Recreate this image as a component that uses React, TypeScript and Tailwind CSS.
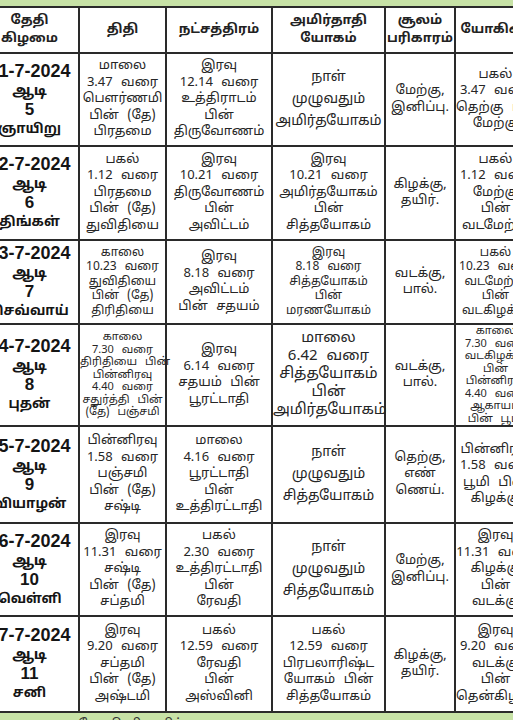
import React from 'react';

type Cell = { lines: string[]; size?: string };

const headers: string[][] = [
  ['தேதி', 'கிழமை'],
  ['திதி'],
  ['நட்சத்திரம்'],
  ['அமிர்தாதி', 'யோகம்'],
  ['சூலம்', 'பரிகாரம்'],
  ['யோகினி'],
];

const rows: { h: string; date: string[]; cells: Cell[] }[] = [
  {
    h: 'h-[93px]',
    date: ['21-7-2024', 'ஆடி', '5', 'ஞாயிறு'],
    cells: [
      { lines: ['மாலை', '3.47 வரை', 'பௌர்ணமி', 'பின் (தே)', 'பிரதமை'] },
      { lines: ['இரவு', '12.14 வரை', 'உத்திராடம்', 'பின்', 'திருவோணம்'] },
      { lines: ['நாள்', 'முழுவதும்', 'அமிர்தயோகம்'], size: 'lg' },
      { lines: ['மேற்கு,', 'இனிப்பு.'] },
      { lines: ['பகல்', '3.47 வரை', 'தெற்கு பின்', 'மேற்கு'] },
    ],
  },
  {
    h: 'h-[94px]',
    date: ['22-7-2024', 'ஆடி', '6', 'திங்கள்'],
    cells: [
      { lines: ['பகல்', '1.12 வரை', 'பிரதமை', 'பின் (தே)', 'துவிதியை'] },
      { lines: ['இரவு', '10.21 வரை', 'திருவோணம்', 'பின்', 'அவிட்டம்'] },
      { lines: ['இரவு', '10.21 வரை', 'அமிர்தயோகம்', 'பின்', 'சித்தயோகம்'] },
      { lines: ['கிழக்கு,', 'தயிர்.'] },
      { lines: ['பகல்', '1.12 வரை', 'மேற்கு', 'பின்', 'வடமேற்கு'] },
    ],
  },
  {
    h: 'h-[84px]',
    date: ['23-7-2024', 'ஆடி', '7', 'செவ்வாய்'],
    cells: [
      { lines: ['காலை', '10.23 வரை', 'துவிதியை', 'பின் (தே)', 'திரிதியை'], size: 'sm' },
      { lines: ['இரவு', '8.18 வரை', 'அவிட்டம்', 'பின் சதயம்'] },
      { lines: ['இரவு', '8.18 வரை', 'சித்தயோகம்', 'பின்', 'மரணயோகம்'], size: 'sm' },
      { lines: ['வடக்கு,', 'பால்.'] },
      { lines: ['பகல்', '10.23 வரை', 'வடமேற்கு', 'பின்', 'வடகிழக்கு'], size: 'sm' },
    ],
  },
  {
    h: 'h-[100px]',
    date: ['24-7-2024', 'ஆடி', '8', 'புதன்'],
    cells: [
      { lines: ['காலை', '7.30 வரை', 'திரிதியை பின்', 'பின்னிரவு', '4.40 வரை', 'சதுர்த்தி பின்', '(தே) பஞ்சமி'], size: 'xs' },
      { lines: ['இரவு', '6.14 வரை', 'சதயம் பின்', 'பூரட்டாதி'] },
      { lines: ['மாலை', '6.42 வரை', 'சித்தயோகம்', 'பின்', 'அமிர்தயோகம்'], size: 'xl' },
      { lines: ['வடக்கு,', 'பால்.'] },
      { lines: ['காலை', '7.30 வரை', 'வடகிழக்கு', 'பின்', 'பின்னிரவு', '4.40 வரை', 'ஆகாயம்', 'பின் பூமி'], size: 'xs' },
    ],
  },
  {
    h: 'h-[97px]',
    date: ['25-7-2024', 'ஆடி', '9', 'வியாழன்'],
    cells: [
      { lines: ['பின்னிரவு', '1.58 வரை', 'பஞ்சமி', 'பின் (தே)', 'சஷ்டி'] },
      { lines: ['மாலை', '4.16 வரை', 'பூரட்டாதி', 'பின்', 'உத்திரட்டாதி'] },
      { lines: ['நாள்', 'முழுவதும்', 'சித்தயோகம்'], size: 'lg' },
      { lines: ['தெற்கு,', 'எண்', 'ணெய்.'] },
      { lines: ['பின்னிரவு', '1.58 வரை', 'பூமி பின்', 'கிழக்கு'] },
    ],
  },
  {
    h: 'h-[93px]',
    date: ['26-7-2024', 'ஆடி', '10', 'வெள்ளி'],
    cells: [
      { lines: ['இரவு', '11.31 வரை', 'சஷ்டி', 'பின் (தே)', 'சப்தமி'] },
      { lines: ['பகல்', '2.30 வரை', 'உத்திரட்டாதி', 'பின்', 'ரேவதி'] },
      { lines: ['நாள்', 'முழுவதும்', 'சித்தயோகம்'], size: 'lg' },
      { lines: ['மேற்கு,', 'இனிப்பு.'] },
      { lines: ['இரவு', '11.31 வரை', 'கிழக்கு', 'பின்', 'வடக்கு'] },
    ],
  },
  {
    h: 'h-[96px]',
    date: ['27-7-2024', 'ஆடி', '11', 'சனி'],
    cells: [
      { lines: ['இரவு', '9.20 வரை', 'சப்தமி', 'பின் (தே)', 'அஷ்டமி'] },
      { lines: ['பகல்', '12.59 வரை', 'ரேவதி', 'பின்', 'அஸ்வினி'] },
      { lines: ['பகல்', '12.59 வரை', 'பிரபலாரிஷ்ட', 'யோகம் பின்', 'சித்தயோகம்'] },
      { lines: ['கிழக்கு,', 'தயிர்.'] },
      { lines: ['இரவு', '9.20 வரை', 'வடக்கு', 'பின்', 'தென்கிழக்கு'] },
    ],
  },
];

function sizeClass(size?: string) {
  if (size === 'xs') return 'text-[11px] leading-[12.5px]';
  if (size === 'sm') return 'text-[12px] leading-[14.5px]';
  if (size === 'lg') return 'text-[14px] leading-[22px]';
  if (size === 'xl') return 'text-[15px] leading-[18px]';
  return 'text-[13px] leading-[16.5px]';
}

export default function App() {
  return (
    <div className="w-[513px] h-[720px] overflow-hidden bg-[#c7e2a6] pt-[6px] font-['Noto_Sans_Tamil','Noto_Sans','Liberation_Sans',sans-serif] text-[#262626]">
      <table className="-ml-[21px] w-[556px] table-fixed border-collapse bg-white">
        <colgroup>
          <col className="w-[99px]" />
          <col className="w-[87px]" />
          <col className="w-[106px]" />
          <col className="w-[113px]" />
          <col className="w-[70px]" />
          <col className="w-[81px]" />
        </colgroup>
        <thead>
          <tr className="h-[46px]">
            {headers.map((h, i) => (
              <th
                key={i}
                className="border-2 border-[#2a2a2a] px-0 text-center align-middle text-[13px] font-bold leading-[18px] whitespace-nowrap text-[#222]"
              >
                {h.map((l) => (
                  <div key={l}>{l}</div>
                ))}
              </th>
            ))}
          </tr>
        </thead>
        <tbody>
          {rows.map((r) => (
            <tr key={r.date[0]} className={r.h}>
              <td className="border-2 border-[#2a2a2a] text-center align-middle font-bold text-[#151515] whitespace-nowrap">
                <div className="text-[18px] leading-[22px] font-['Liberation_Sans',sans-serif]">{r.date[0]}</div>
                <div className="text-[15px] leading-[19px]">{r.date[1]}</div>
                <div className="text-[17px] leading-[18px] font-['Liberation_Sans',sans-serif]">{r.date[2]}</div>
                <div className="text-[13.5px] leading-[21px]">{r.date[3]}</div>
              </td>
              {r.cells.map((c, i) => (
                <td
                  key={i}
                  className={`border-2 border-[#2a2a2a] px-0 text-center align-middle whitespace-nowrap [word-spacing:5px] ${sizeClass(c.size)}`}
                >
                  {c.lines.map((l, j) => (
                    <div key={j}>{l}</div>
                  ))}
                </td>
              ))}
            </tr>
          ))}
        </tbody>
      </table>
      <div className="pl-[78px] pt-[4px] text-[13px] leading-[16px] text-[#333]">யோகினி குறிப்பு</div>
    </div>
  );
}
